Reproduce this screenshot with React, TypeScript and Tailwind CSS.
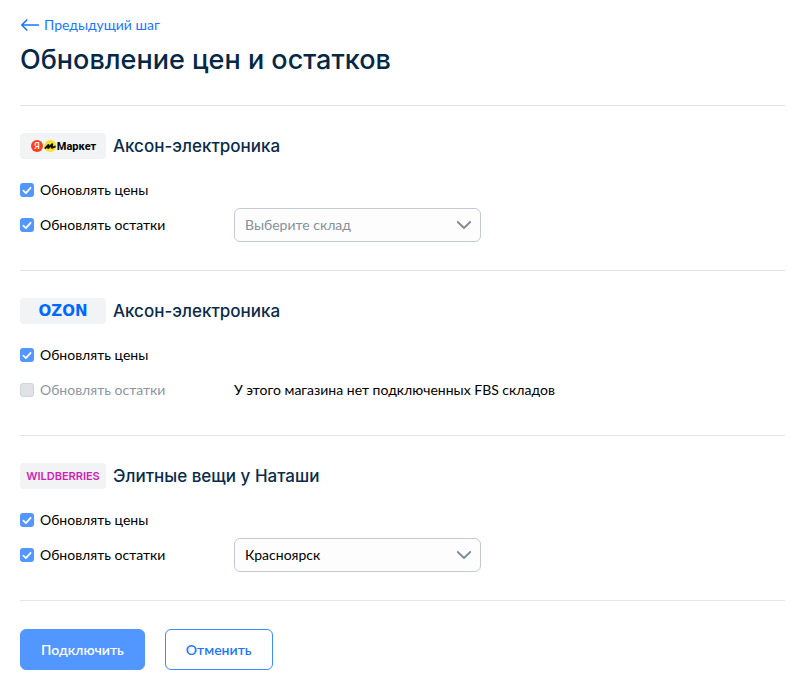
import { useId, useState } from 'react';
import type { ReactNode } from 'react';

interface Shop {
  id: string;
  name: string;
  logo: ReactNode;
  warehouses: string[];
  warehouse: string;
}

function YandexMarketLogo() {
  return (
    <span className="flex items-center">
      <svg width="27" height="14" viewBox="0 0 27 14" role="img" aria-label="Яндекс">
        <circle cx="7" cy="7" r="6" fill="#fc3f1d" />
        <text
          x="7"
          y="10.2"
          textAnchor="middle"
          fill="#fff"
          className="font-['Roboto',sans-serif] text-[9px] font-medium"
        >
          Я
        </text>
        <circle cx="20.3" cy="7" r="6" fill="#fbe02a" />
        <path
          d="M14.8 9.6 18.4 6 18.2 9 22.2 5.2 21.8 8.8 25.6 7.4"
          fill="none"
          stroke="#111"
          strokeWidth="1.9"
          strokeLinejoin="round"
        />
      </svg>
      <span className="font-['Roboto',sans-serif] text-[11px] leading-none font-bold text-black">
        Маркет
      </span>
    </span>
  );
}

const SHOPS: Shop[] = [
  {
    id: 'market',
    name: 'Аксон-электроника',
    logo: <YandexMarketLogo />,
    warehouses: ['Красноярск'],
    warehouse: '',
  },
  {
    id: 'ozon',
    name: 'Аксон-электроника',
    logo: (
      <span className="font-['DejaVu_Sans',sans-serif] text-[15px] leading-none font-bold text-[#0069ff]">
        OZON
      </span>
    ),
    warehouses: [],
    warehouse: '',
  },
  {
    id: 'wildberries',
    name: 'Элитные вещи у Наташи',
    logo: (
      <span className="font-['Inter',sans-serif] text-[11px] leading-none font-semibold text-[#d01fb4]">
        WILDBERRIES
      </span>
    ),
    warehouses: ['Красноярск'],
    warehouse: 'Красноярск',
  },
];

interface CheckboxProps {
  label: string;
  checked: boolean;
  disabled?: boolean;
  onChange: (checked: boolean) => void;
}

function Checkbox({ label, checked, disabled, onChange }: CheckboxProps) {
  return (
    <label className={`flex items-center gap-1.5 ${disabled ? 'text-[#8b96a3]' : 'text-black'}`}>
      <span className="grid shrink-0">
        <input
          type="checkbox"
          checked={checked}
          disabled={disabled}
          onChange={(e) => onChange(e.target.checked)}
          className="col-start-1 row-start-1 size-3.5 appearance-none rounded-[3px] checked:bg-[#5197ff] disabled:border disabled:border-[#ced4da] disabled:bg-[#dfe3e6]"
        />
        {checked && (
          <svg
            viewBox="0 0 14 14"
            className="pointer-events-none col-start-1 row-start-1 size-3.5"
            fill="none"
            stroke="#fff"
            strokeWidth="1.8"
            strokeLinecap="round"
            strokeLinejoin="round"
          >
            <path d="M3.4 7.7 5.9 10.1 10.6 4.8" />
          </svg>
        )}
      </span>
      {label}
    </label>
  );
}

function ShopSection({ shop }: { shop: Shop }) {
  const hasWarehouses = shop.warehouses.length > 0;
  const [prices, setPrices] = useState(true);
  const [stocks, setStocks] = useState(hasWarehouses);
  const [warehouse, setWarehouse] = useState(shop.warehouse);
  const selectId = useId();

  return (
    <section className="border-t border-[#e4e5e7] pt-[27px] pb-7">
      <div className="flex items-center gap-[7px]">
        <div className="flex h-[26px] w-[86px] items-center justify-center rounded bg-[#f2f3f5]">
          {shop.logo}
        </div>
        <h2 className="font-['Inter',sans-serif] text-[17px] leading-6 font-medium text-[#0a2c4a]">
          {shop.name}
        </h2>
      </div>

      <div className="mt-5 flex h-[22px] items-center">
        <Checkbox label="Обновлять цены" checked={prices} onChange={setPrices} />
      </div>

      <div className="mt-[7px] flex min-h-[34px] items-center">
        <div className="w-[214px] shrink-0">
          <Checkbox
            label="Обновлять остатки"
            checked={stocks}
            disabled={!hasWarehouses}
            onChange={setStocks}
          />
        </div>
        {hasWarehouses ? (
          <div className="grid w-[247px] items-center">
            <select
              id={selectId}
              aria-label="Склад"
              value={warehouse}
              onChange={(e) => setWarehouse(e.target.value)}
              className={`col-start-1 row-start-1 h-[34px] w-full appearance-none rounded-md border border-[#c3cad6] bg-[#fdfdfd] pr-9 pl-2.5 ${
                warehouse ? 'text-black' : 'text-[#84909c]'
              }`}
            >
              <option value="" disabled>
                Выберите склад
              </option>
              {shop.warehouses.map((w) => (
                <option key={w} value={w}>
                  {w}
                </option>
              ))}
            </select>
            <svg
              viewBox="0 0 16 10"
              className="pointer-events-none col-start-1 row-start-1 mr-[9px] h-2.5 w-4 justify-self-end"
              fill="none"
              stroke="#7d8996"
              strokeWidth="1.8"
              strokeLinecap="round"
              strokeLinejoin="round"
            >
              <path d="M1.8 2 8 8 14.2 2" />
            </svg>
          </div>
        ) : (
          <p className="text-black">У этого магазина нет подключенных FBS складов</p>
        )}
      </div>
    </section>
  );
}

export default function App() {
  return (
    <main className="min-h-screen bg-white pt-[15px] pr-[15px] pb-[15px] pl-5 font-['Lato','Noto_Sans',sans-serif] text-sm leading-5">
      <a href="#" className="flex w-fit items-center gap-1 text-[#1a77ff]">
        <svg
          width="20"
          height="14"
          viewBox="0 0 20 14"
          fill="none"
          stroke="currentColor"
          strokeWidth="1.7"
          strokeLinecap="round"
          strokeLinejoin="round"
        >
          <path d="M18.3 7H2M6.8 2 1.8 7 6.8 12" />
        </svg>
        Предыдущий шаг
      </a>
      <h1 className="mt-[7px] mb-[27px] font-['Inter',sans-serif] text-[27px] leading-9 font-medium text-[#042846]">
        Обновление цен и остатков
      </h1>

      {SHOPS.map((shop) => (
        <ShopSection key={shop.id} shop={shop} />
      ))}

      <div className="flex gap-5 border-t border-[#e4e5e7] pt-7">
        <button
          type="button"
          className="h-[41px] rounded-md border border-[#5197ff] bg-[#5197ff] px-5 font-semibold text-white"
        >
          Подключить
        </button>
        <button
          type="button"
          className="h-[41px] rounded-md border border-[#3d8bff] px-5 font-semibold text-[#1a77ff]"
        >
          Отменить
        </button>
      </div>
    </main>
  );
}
